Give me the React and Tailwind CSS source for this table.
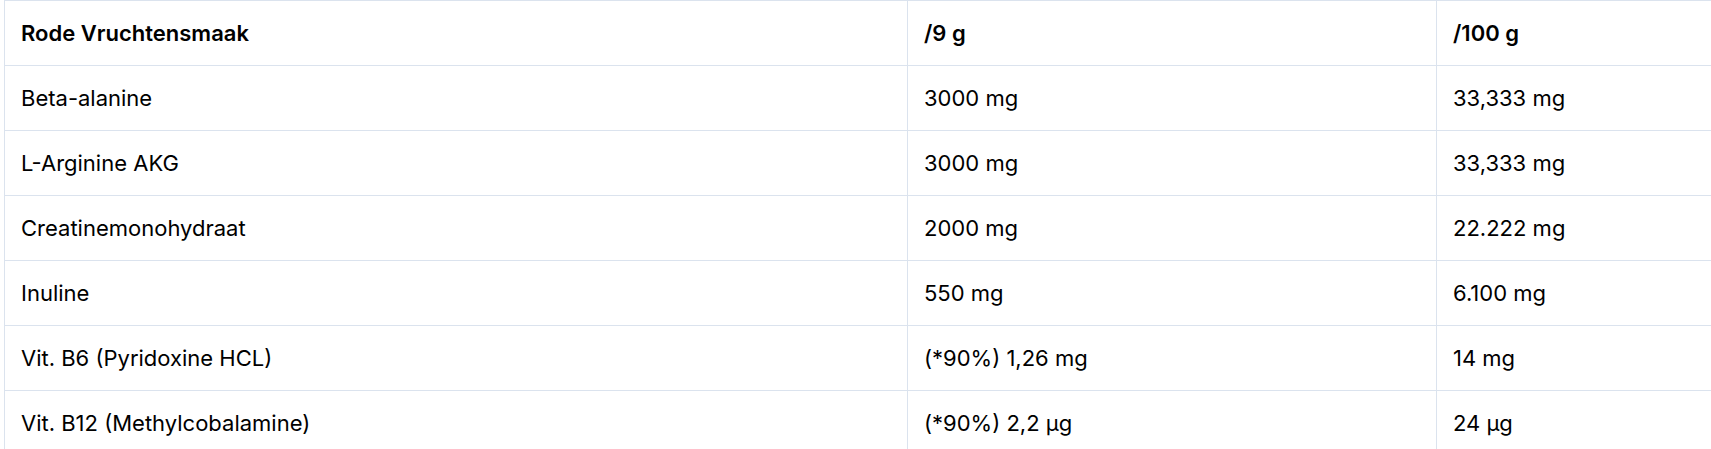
const ROWS = [
  ["Beta-alanine", "3000 mg", "33,333 mg"],
  ["L-Arginine AKG", "3000 mg", "33,333 mg"],
  ["Creatinemonohydraat", "2000 mg", "22.222 mg"],
  ["Inuline", "550 mg", "6.100 mg"],
  ["Vit. B6 (Pyridoxine HCL)", "(*90%) 1,26 mg", "14 mg"],
  ["Vit. B12 (Methylcobalamine)", "(*90%) 2,2 µg", "24 µg"],
];

function Cell({ children, first, head }) {
  return (
    <td
      className={`h-[65px] border-b border-[#dbe3ee] px-4 align-middle ${
        first ? "" : "border-l"
      } ${head ? "font-semibold" : "font-normal"}`}
    >
      {children}
    </td>
  );
}

export default function App() {
  return (
    <div className="min-h-[449px] overflow-hidden bg-white pl-1 font-['Inter',sans-serif] text-[22px] leading-none text-black">
      <table className="w-[1707px] table-fixed border-collapse border-l border-t border-[#dbe3ee]">
        <colgroup>
          <col className="w-[903px]" />
          <col className="w-[529px]" />
          <col />
        </colgroup>
        <thead>
          <tr>
            <Cell first head>Rode Vruchtensmaak</Cell>
            <Cell head>/9 g</Cell>
            <Cell head>/100 g</Cell>
          </tr>
        </thead>
        <tbody>
          {ROWS.map((r) => (
            <tr key={r[0]}>
              <Cell first>{r[0]}</Cell>
              <Cell>{r[1]}</Cell>
              <Cell>{r[2]}</Cell>
            </tr>
          ))}
        </tbody>
      </table>
    </div>
  );
}
